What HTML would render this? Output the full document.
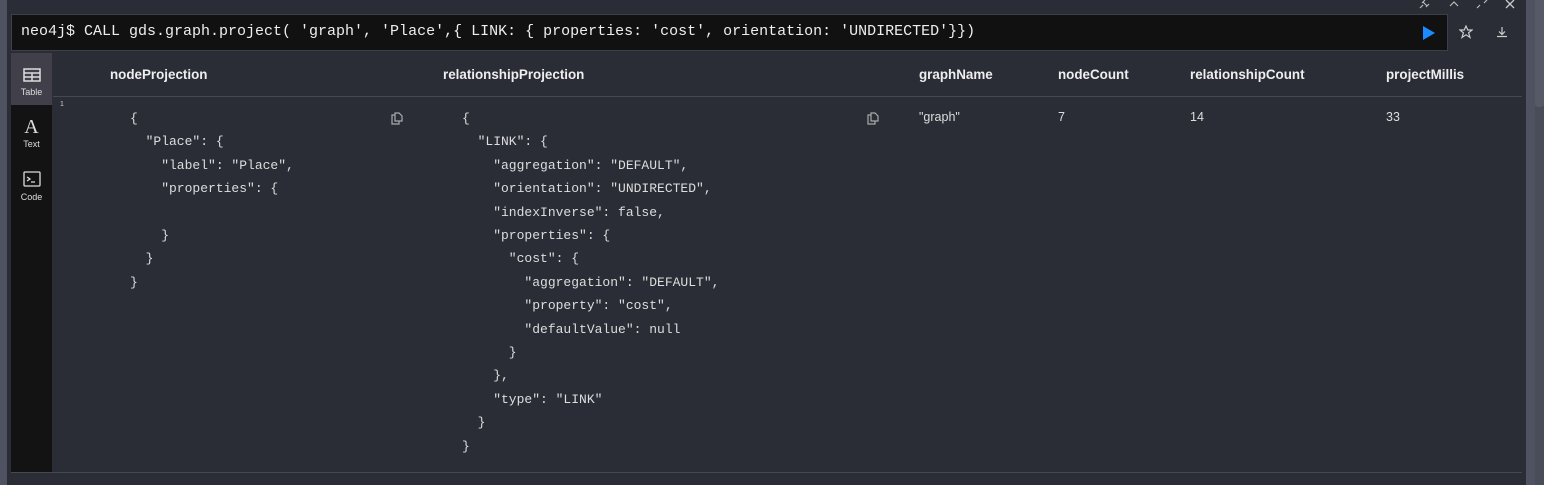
<!DOCTYPE html>
<html><head><meta charset="utf-8"><style>
*{margin:0;padding:0;box-sizing:border-box}
body{width:1544px;height:485px;background:#2a2d36;position:relative;overflow:hidden;font-family:"Liberation Sans",sans-serif;color:#e6e6e6}
.a{position:absolute}
.mono{font-family:"Liberation Mono","DejaVu Sans Mono",monospace;font-size:13px;white-space:pre;line-height:23.4px;color:#ddd}
.h{font-weight:bold;font-size:13.4px;color:#eee;top:67px}
.v{font-size:12.5px;top:110px;color:#ddd}
.sb{color:#ddd;font-size:9px;text-align:center;width:41px;left:11px}
</style></head><body>
<div class="a" style="left:0;top:0;width:7px;height:485px;background:#4f5361"></div>
<div class="a" style="left:1526px;top:0;width:9px;height:485px;background:#4f5361"></div>
<div class="a" style="left:1535px;top:0;width:9px;height:485px;background:#494d58"></div>
<div class="a" style="left:1535px;top:0;width:9px;height:107px;background:#555a66;border-radius:0 0 3px 3px"></div>
<div class="a" style="left:11px;top:14px;width:1437px;height:37px;background:#111;border:1px solid #3a3f48"></div>
<div class="a mono" style="left:21px;top:21px;font-size:15px;line-height:22px;color:#eee">neo4j$ CALL gds.graph.project( 'graph', 'Place',{ LINK: { properties: 'cost', orientation: 'UNDIRECTED'}})</div>
<svg class="a" style="left:1423px;top:26px" width="12" height="14"><path d="M0 0L12 7L0 14Z" fill="#1a8cff"/></svg>
<svg class="a" style="left:1459px;top:25px" width="14" height="14" fill="none" stroke="#ccc" stroke-width="1.2"><path d="M7 1L8.8 5H13L9.6 7.8L11 12.5L7 9.8L3 12.5L4.4 7.8L1 5H5.2Z"/></svg>
<svg class="a" style="left:1496px;top:26px" width="12" height="12" fill="none" stroke="#ccc" stroke-width="1.2"><path d="M6 1V8M3 5.5L6 8.5L9 5.5M1 10.5H11"/></svg>
<svg class="a" style="left:1418px;top:0" width="12" height="9" fill="none" stroke="#bbb" stroke-width="1.2"><path d="M2 8L5 5M5 2L9 6M4 3L7 0M8 7L11 4"/></svg>
<svg class="a" style="left:1448px;top:0" width="12" height="8" fill="none" stroke="#bbb" stroke-width="1.2"><path d="M2 6L6 2L10 6"/></svg>
<svg class="a" style="left:1476px;top:0" width="12" height="9" fill="none" stroke="#bbb" stroke-width="1.2"><path d="M1 8L4 5M8 3L11 0"/></svg>
<svg class="a" style="left:1505px;top:0" width="12" height="9" fill="none" stroke="#ccc" stroke-width="1.3"><path d="M1 0L9 8M9 0L1 8"/></svg>
<div class="a" style="left:11px;top:53px;width:41px;height:419px;background:#131313"></div>
<div class="a" style="left:11px;top:53px;width:41px;height:52px;background:#403f4a"></div>
<svg class="a" style="left:23px;top:68px" width="18" height="14" fill="none" stroke="#ddd" stroke-width="1.5"><rect x="1" y="1" width="16" height="12"/><path d="M1 5H17M1 9H17M9 5V13"/></svg>
<div class="a sb" style="top:87px">Table</div>
<div class="a" style="left:11px;top:116px;width:41px;text-align:center;font-family:'Liberation Serif',serif;font-size:20px;color:#ddd">A</div>
<div class="a sb" style="top:139px">Text</div>
<svg class="a" style="left:23px;top:171px" width="18" height="16" fill="none" stroke="#ddd" stroke-width="1.3"><rect x="1" y="1" width="16" height="14" rx="1"/><path d="M4 6L7 8L4 10M8 11H12"/></svg>
<div class="a sb" style="top:192px">Code</div>
<div class="a" style="left:53px;top:96px;width:1469px;height:1px;background:#454852"></div>
<div class="a" style="left:11px;top:472px;width:1511px;height:1px;background:#454852"></div>
<div class="a h" style="left:110px">nodeProjection</div>
<div class="a h" style="left:443px">relationshipProjection</div>
<div class="a h" style="left:919px">graphName</div>
<div class="a h" style="left:1058px">nodeCount</div>
<div class="a h" style="left:1190px">relationshipCount</div>
<div class="a h" style="left:1386px">projectMillis</div>
<div class="a" style="left:60px;top:101px;font-size:7px;color:#ccc">1</div>
<div class="a mono" style="left:130px;top:107px">{
  "Place": {
    "label": "Place",
    "properties": {

    }
  }
}</div>
<div class="a mono" style="left:462px;top:107px">{
  "LINK": {
    "aggregation": "DEFAULT",
    "orientation": "UNDIRECTED",
    "indexInverse": false,
    "properties": {
      "cost": {
        "aggregation": "DEFAULT",
        "property": "cost",
        "defaultValue": null
      }
    },
    "type": "LINK"
  }
}</div>
<svg class="a" style="left:391px;top:112px" width="12" height="13" fill="none" stroke="#aaa" stroke-width="1.2"><path d="M4 1H8L11 4V9H4Z"/><path d="M4 3H1V12H8V9"/></svg>
<svg class="a" style="left:867px;top:112px" width="12" height="13" fill="none" stroke="#aaa" stroke-width="1.2"><path d="M4 1H8L11 4V9H4Z"/><path d="M4 3H1V12H8V9"/></svg>
<div class="a v" style="left:919px">"graph"</div>
<div class="a v" style="left:1058px">7</div>
<div class="a v" style="left:1190px">14</div>
<div class="a v" style="left:1386px">33</div>
</body></html>
